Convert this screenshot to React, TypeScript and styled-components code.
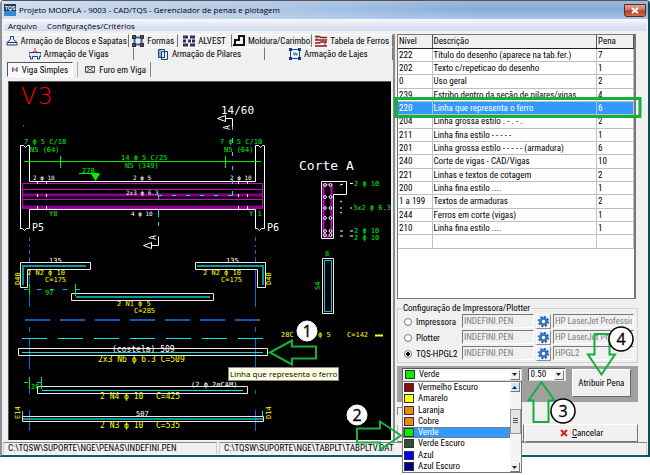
import React from "react";
import styled, { createGlobalStyle, css } from "styled-components";

const uiFont = '"Roboto Condensed", "Open Sans Condensed", "Liberation Sans", sans-serif';
const chromeFont = '"Open Sans", "Noto Sans", sans-serif';
const green = "#14b03c";

const GlobalStyle = createGlobalStyle`
  * { box-sizing: border-box; }
  body { margin: 0; background: #fff; font: 9px/12px ${uiFont}; color: #000; }
  button, input, select { font: inherit; color: inherit; }
`;

const Stage = styled.main`
  position: relative;
  min-height: 475px;
`;

const Window = styled.section`
  display: flex;
  flex-direction: column;
  border: 1px solid #56535c;
  border-width: 1px 2px 2px 2px;
  border-color: #56535c #0c4a56 #0c5c70 #8c9299;
  border-radius: 4px 4px 0 0;
  background: #f0f0f0;
`;

const TitleBar = styled.header`
  display: flex;
  align-items: center;
  gap: 3px;
  height: 18px;
  padding: 0 2px;
  background: linear-gradient(90deg, rgba(225, 234, 245, 0.8), rgba(200, 218, 240, 0.55) 45%, transparent 75%),
    linear-gradient(#9ab8dc, #86aad6 45%, #a9c3e4);
`;

const Title = styled.h1`
  flex: 1;
  margin: 0;
  font: 8px/14px ${chromeFont};
`;

const CloseButton = styled.button`
  display: grid;
  place-items: center;
  width: 22px;
  height: 13px;
  padding: 0;
  border: 1px solid #5a2a26;
  border-radius: 0 0 3px 3px;
  background: linear-gradient(#e0a698, #cf6a55 48%, #b53a20 52%, #cf7050);
`;

const MenuBar = styled.nav`
  display: flex;
  gap: 8px;
  height: 12px;
  padding: 0 3px;
  margin: 0 2px;
  background: linear-gradient(#f7f9fd, #dde3f2 60%, #d3dbee);
`;

const MenuItem = styled.button`
  padding: 0 1px;
  border: 0;
  background: none;
  font: 8px/11px ${chromeFont};
`;

const Body = styled.div`
  display: grid;
  grid-template-columns: minmax(0, 393fr) minmax(0, 249fr);
  margin: 0 2px;
  padding-top: 3px;
`;

const LeftPane = styled.div`
  display: flex;
  flex-direction: column;
  min-width: 0;
  border-right: 2px solid #8a8a8a;
  margin-right: 2px;
`;

const TabRow = styled.div<{ $columns: string }>`
  display: grid;
  grid-template-columns: ${(p) => p.$columns};
  height: 13px;
`;

const Tab = styled.button<{ $front?: boolean }>`
  display: flex;
  align-items: center;
  justify-content: center;
  gap: 3px;
  min-width: 0;
  padding: 0;
  border: 0;
  border-top: 1px solid ${(p) => (p.$front ? "#f0f0f0" : "#fff")};
  border-right: 1px solid #777;
  background: #f0f0f0;
  white-space: nowrap;
  line-height: 12px;
`;

const SubTabs = styled.div`
  display: flex;
  gap: 4px;
  height: 21px;
  padding: 2px 3px 4px;
`;

const SubTab = styled.button<{ $pressed?: boolean }>`
  display: flex;
  align-items: center;
  gap: 4px;
  height: 15px;
  padding: 0 4px;
  border: 0;
  border-right: 1px solid #888;
  background: #f0f0f0;
  line-height: 12px;
  white-space: nowrap;
  ${(p) =>
    p.$pressed
      ? css`
          width: 66px;
          border: 1px solid #666;
          border-color: #555 #fff #fff #555;
          background: #f8f8f8;
        `
      : css`
          width: 74px;
          border-left: 1px solid #aaa;
          padding-left: 7px;
        `}
`;

const CanvasFrame = styled.div`
  flex: 1;
  margin: 0 2px 2px 4px;
  border-top: 1px solid #555;
  border-left: 1px solid #555;
  background: #000;
`;

const Drawing = styled.svg`
  display: block;
  width: 100%;
  height: 356px;
  font-family: "DejaVu Sans Mono", "Liberation Mono", monospace;
`;

const RightPane = styled.div`
  display: flex;
  flex-direction: column;
  gap: 3px;
  min-width: 0;
  padding-right: 8px;
`;

const GridBox = styled.div`
  height: 265px;
  border: 1px solid #777;
  border-right-width: 2px;
  margin-right: 2px;
  background: #fff;
`;

const LevelTable = styled.table`
  width: 100%;
  border-collapse: collapse;
  table-layout: fixed;
`;

const Th = styled.th<{ $width?: string }>`
  width: ${(p) => p.$width ?? "auto"};
  height: 13px;
  padding: 0 1px;
  border-right: 1px solid #555;
  border-bottom: 1px solid #222;
  background: #f0f0f0;
  font-weight: normal;
  line-height: 12px;
  text-align: left;
`;

const Tr = styled.tr<{ $selected?: boolean }>`
  height: 13px;
  &:nth-child(3n) { height: 14px; }
  ${(p) => p.$selected && css`background: #3399ff; color: #fff;`}
`;

const Td = styled.td`
  padding: 0 1px;
  border-right: 1px solid #c0c0c0;
  border-bottom: 1px solid #c0c0c0;
  line-height: 12px;
  white-space: nowrap;
`;

const Group = styled.fieldset`
  display: grid;
  grid-template-columns: 56px minmax(0, 71fr) 15px minmax(0, 80fr);
  gap: 1px 2px;
  min-width: 0;
  height: 61px;
  margin: 0;
  padding: 0 3px 2px 6px;
  border: 1px solid #d0d0d0;
`;

const Legend = styled.legend`
  padding: 0 1px;
  margin-left: -2px;
  line-height: 12px;
`;

const RadioLabel = styled.label`
  display: flex;
  align-items: center;
  gap: 4px;
  white-space: nowrap;
`;

const Radio = styled.input`
  appearance: none;
  flex: none;
  width: 8px;
  height: 8px;
  margin: 0;
  border: 1px solid #777;
  border-radius: 50%;
  background: #fff;
  &:checked { background: radial-gradient(#000 0 2px, #fff 2px); }
`;

const FileInput = styled.input`
  width: 100%;
  min-width: 0;
  height: 14px;
  padding: 0 1px;
  border: 1px solid #888;
  border-color: #777 #fff #fff #777;
  background: #f0f0f0;
  color: #808080;
`;

const GearButton = styled.button`
  display: grid;
  place-items: center;
  height: 15px;
  padding: 0;
  border: 1px solid #888;
  border-color: #fff #888 #888 #fff;
  background: #f0f0f0;
`;

const PenBar = styled.div`
  display: grid;
  grid-template-columns: minmax(0, 119fr) minmax(0, 38fr) minmax(0, 59fr);
  gap: 6px;
  height: 36px;
  padding: 2px 7px 2px 5px;
  background: #a0a0a0;
`;

const ComboFrame = styled.label`
  position: relative;
  display: flex;
  align-items: center;
  gap: 4px;
  height: 13px;
  padding: 0 1px 0 2px;
  border: 1px solid #666;
  border-color: #555 #ddd #ddd #555;
  background: #fff;
`;

const Combo = styled.select`
  appearance: none;
  flex: 1;
  min-width: 0;
  padding: 0;
  border: 0;
  background: transparent;
  line-height: 11px;
`;

const Arrow = styled.span<{ $up?: boolean }>`
  display: grid;
  place-items: center;
  flex: none;
  width: 10px;
  height: 10px;
  border: 1px solid #777;
  border-color: #fff #777 #777 #fff;
  background: ${(p) => (p.$up ? "#cfe5fa" : "#f0f0f0")};
`;

const Swatch = styled.span<{ $color: string }>`
  flex: none;
  width: 10px;
  height: 9px;
  border: 1px solid #333;
  background: ${(p) => p.$color};
`;

const AssignButton = styled.button`
  height: 28px;
  padding: 0;
  margin-top: 1px;
  border: 1px solid #777;
  border-color: #fff #666 #666 #fff;
  background: #f0f0f0;
  white-space: nowrap;
`;

const Footer = styled.div`
  display: flex;
  flex-direction: column;
  gap: 9px;
  padding-top: 2px;
`;

const GroupCorner = styled.div`
  width: 50%;
  height: 8px;
  border-top: 1px solid #888;
  border-left: 1px solid #888;
`;

const Actions = styled.div`
  display: grid;
  grid-template-columns: 126fr 112fr;
  gap: 1px;
`;

const ActionSlot = styled.div`
  height: 18px;
  border: 1px solid #888;
  border-color: #fff #777 #777 #bbb;
`;

const CancelButton = styled.button`
  display: flex;
  align-items: center;
  justify-content: center;
  gap: 4px;
  height: 18px;
  padding: 0;
  border: 1px solid #777;
  border-color: #fff #777 #777 #fff;
  background: #f0f0f0;
`;

const StatusBar = styled.footer`
  display: grid;
  grid-template-columns: 1fr 2fr;
  gap: 2px;
  height: 13px;
  margin: 0 1px;
`;

const StatusCell = styled.span`
  padding: 0 4px;
  border: 1px solid #888;
  border-color: #888 #ccc #fff #ccc;
  white-space: nowrap;
  line-height: 11px;
`;

const OptionList = styled.div`
  position: absolute;
  z-index: 1;
  top: 12px;
  left: -1px;
  right: -1px;
  display: grid;
  grid-template-columns: minmax(0, 1fr) 11px;
  height: 92px;
  border: 1px solid #777;
  background: #fff;
`;

const Options = styled.ul`
  display: grid;
  grid-auto-rows: 1fr;
  margin: 0;
  padding: 0;
  list-style: none;
`;

const Option = styled.li<{ $selected?: boolean }>`
  display: flex;
  align-items: center;
  gap: 4px;
  padding-left: 1px;
  line-height: 11px;
  ${(p) => p.$selected && css`
    background: #3399ff;
    color: #fff;
    outline: 1px dotted #b5651d;
    outline-offset: -1px;
  `}
`;

const ScrollTrack = styled.div`
  display: flex;
  flex-direction: column;
  justify-content: space-between;
  align-items: stretch;
  background: #f4f4f4;
`;

const Thumb = styled.span`
  display: grid;
  place-items: center;
  height: 25px;
  margin-bottom: 12px;
  border: 1px solid #999;
  background: #e4e4e4;
`;

const Tooltip = styled.div`
  position: absolute;
  top: 367px;
  left: 228px;
  padding: 0 1px;
  border: 1px solid #888;
  background: #ffffe1;
  font: 8px/12px ${chromeFont};
  white-space: nowrap;
`;

const Annotations = styled.svg`
  position: absolute;
  z-index: 2;
  top: 0;
  left: 0;
  pointer-events: none;
  font-family: "Open Sans", sans-serif;
`;

const levels: [string, string, string][] = [
  ["222", "Título do desenho (aparece na tab.fer.)", "7"],
  ["202", "Texto c/repeticao do desenho", "1"],
  ["0", "Uso geral", "2"],
  ["239", "Estribo dentro da seção de pilares/vigas", "4"],
  ["220", "Linha que representa o ferro", "6"],
  ["204", "Linha grossa estilo . - . - .", "2"],
  ["211", "Linha fina estilo - - - - -", "1"],
  ["201", "Linha grossa estilo - - - - - (armadura)", "6"],
  ["240", "Corte de vigas - CAD/Vigas", "10"],
  ["221", "Linhas e textos de cotagem", "2"],
  ["200", "Linha fina estilo ....", "1"],
  ["1 a 199", "Textos de armaduras", "2"],
  ["244", "Ferros em corte (vigas)", "1"],
  ["210", "Linha fina estilo ....", "1"],
  ["", "", ""],
];

const printers: [string, string][] = [
  ["Impressora", "HP LaserJet Professional"],
  ["Plotter", "HP LaserJet Professional"],
  ["TQS-HPGL2", "HPGL2"],
];

const pens: [string, string][] = [
  ["Vermelho Escuro", "#8b0a0a"],
  ["Amarelo", "#ffff00"],
  ["Laranja", "#f0860c"],
  ["Cobre", "#f0860c"],
  ["Verde", "#00f000"],
  ["Verde Escuro", "#2f5032"],
  ["Azul", "#0000ff"],
  ["Azul Escuro", "#00008b"],
];

const Glyph = ({ w = 12, h = 12, children }: { w?: number; h?: number; children: React.ReactNode }) => (
  <svg width={w} height={h} viewBox={`0 0 ${w} ${h}`} fill="none" aria-hidden="true">
    {children}
  </svg>
);

const FootingIcon = () => (
  <Glyph><path d="M4.500 1.500h3v3l3.500 3v2.500H1V7.500l3.500-3zM1 7.500h10" stroke="#1f3f78" fill="#e8f0fa" /></Glyph>
);
const FormsIcon = () => (
  <Glyph>
    <path d="M2.500 2.500h7v7h-7z" stroke="#2d68a8" strokeWidth="2" />
    <path d="M0 0h4v4H0zM8 0h4v4H8zM0 8h4v4H0zM8 8h4v4H8z" fill="#24324c" />
    <path d="M1 1h2v2H1zM9 1h2v2H9zM1 9h2v2H1zM9 9h2v2H9z" fill="#a03030" />
  </Glyph>
);
const BlocksIcon = () => (
  <Glyph>
    <path d="M0 2h5M7 2h5M0 6h3M5 6h3M9 6h3M0 10h5M7 10h5" stroke="#1f2f58" strokeWidth="3" />
    <path d="M1 2h2M8 2h2M5 6h2M1 10h2M8 10h2" stroke="#c02030" />
  </Glyph>
);
const StampIcon = () => (
  <Glyph><path d="M0 10h11V1H6v4M2 10V5h5M11 1v9" stroke="#111" strokeWidth="2" /></Glyph>
);
const IronTableIcon = () => (
  <Glyph>
    <path d="M0 1.500h4l2 1h6M0 5h12M0 8h4l2-1h6M0 11h12" stroke="#8a2020" strokeWidth="1.500" />
    <path d="M2 1v4M10 7v4" stroke="#8a2020" />
  </Glyph>
);
const BeamIcon = () => (
  <Glyph><path d="M1.500 11V8.500H0v-4h12v4h-1.500V11h-2V8.500h-5V11z" fill="#dce8f6" stroke="#1f3f78" /><path d="M6 0v5M4 3l2 2 2-2" stroke="#d02020" /></Glyph>
);
const PillarIcon = () => (
  <Glyph><path d="M1.500 1.500h6v8h-6zM4.500 3.500h6v8h-6z" stroke="#1f3f78" fill="#e0ecf8" /><path d="M3 2v7" stroke="#2d68a8" /></Glyph>
);
const SlabIcon = () => (
  <Glyph>
    <path d="M1.500 1.500h9v9h-9z" stroke="#1f4f90" />
    <path d="M0 0h3v3H0zM9 0h3v3H9zM0 9h3v3H0zM9 9h3v3H9z" fill="#163a78" />
    <path d="M4 5h1v2h1V5h1v2h1V5" stroke="#2d78c0" />
  </Glyph>
);
const SimpleBeamIcon = () => (
  <Glyph w={11} h={9}><path d="M1.500 0v9M9.500 0v9" stroke="#333" strokeWidth="2" /><path d="M2 5h7M3 2l2 2h1l2-2M3 8l2-2h1l2 2" stroke="#a030a0" /></Glyph>
);
const HoleIcon = () => (
  <Glyph w={11} h={9}><path d="M.5 1.500h10v6H.5zM2 2l3.500 3L9 2M2 7l2-2M9 7L7 5" stroke="#222" /></Glyph>
);
const GearIcon = () => (
  <Glyph w={11} h={11}>
    <circle cx="5.500" cy="5.500" r="4.500" stroke="#174f98" strokeWidth="2" strokeDasharray="2 1.500" />
    <circle cx="5.500" cy="5.500" r="3" stroke="#2d78cc" strokeWidth="2.500" />
    <circle cx="5.500" cy="5.500" r="1.300" fill="#fff" />
  </Glyph>
);
const Chevron = ({ up }: { up?: boolean }) => (
  <Glyph w={5} h={3}><path d={up ? "M0 3h5L2.500 0z" : "M0 0h5L2.500 3z"} fill="#222" /></Glyph>
);

type NoteProps = { x: number; y: number; c?: string; s?: number; r?: number; children: string };
const Note = ({ x, y, c = "#ffff00", s = 7, r, children }: NoteProps) => (
  <text x={x} y={y} fill={c} fontSize={s} transform={r ? `rotate(${r} ${x} ${y})` : undefined} xmlSpace="preserve">
    {children}
  </text>
);

const lime = "#00f000";
const white = "#fff";

const BeamDrawing = () => (
  <Drawing viewBox="9 82 382 356" preserveAspectRatio="xMinYMin meet" role="img">
    <g fontFamily="DejaVu Sans" fontWeight="200">
      <text x="21 38" y="104" fontSize="23" fill="#ff0000">V3</text>
    </g>
    <path d="M23.500 125v2" stroke="#ff0000" />

    <g fill="none" stroke="#0a6ad8">
      <path d="M29.500 237v4M29.500 245v2M29.500 250v4M29.500 257v5M29.500 270v37M29.500 327v5M29.500 339v30M29.500 380v14M29.500 410v21" />
      <path d="M255.500 237v4M255.500 245v2M255.500 250v4M255.500 257v5M255.500 270v37M255.500 327v5M255.500 339v30M255.500 390v4M255.500 410v21" />
      <path d="M25 320h235" strokeDasharray="25 10" strokeWidth="2" stroke="#0a5cb4" />
    </g>
    <path d="M22 338.500h241" stroke="#00e5e5" strokeDasharray="25 11" />

    <g fill="none" stroke={white}>
      <path d="M20.500 229V145.500h3l2 2 2-2h2V181.500H255.500V145.500h3l2 2 2-2h2V228.500h-3l-2 2-2-2h-2V209.500H29.500V228.500h-3l-2 2-2-2h-2" />
    </g>
    <g fill="none" stroke="#d000d0">
      <path d="M22.500 183.500h240v25h-240zM22 189.500h240M22 199.500h240" />
      <path d="M23 195h239M23 207h239" stroke="#860086" strokeWidth="3" />
    </g>
    <path d="M37.500 181v3M46.500 181v3M37.500 194v3M46.500 194v3M37.500 206v3M46.500 206v3M238.500 181v3M247.500 181v3M238.500 194v3M247.500 194v3M238.500 206v3M247.500 206v3" stroke={white} />
    <g stroke={lime} fill="none">
      <path d="M24 161.500h237M60.500 156v12M225.500 156v12M79 173.500h20" />
      <path d="M91 174h9l-4.500 7z" fill={lime} stroke="none" />
    </g>
    <g stroke="#00e5e5">
      <path d="M158 195.500h75" strokeDasharray="4 10" />
      <path d="M232.500 126v4M232.500 138v5M232.500 152v4M232.500 166v4M232.500 180v4M232.500 191v5M158.500 196v4M158.500 209v8M158.500 222v4" />
    </g>
    <g stroke={white} fill="none">
      <path d="M217.500 118.500l8-3v6zM225 118.500h7.500v8" />
      <path d="M143.500 245.500l8-3v6zM151 245.500h7.500v-9" />
      <path d="M321.500 181.500h25v13h-13v44h-12z" />
      <path d="M340 185l3-1M340 201l2 1M340 208h2M340 213l2-1M340 231h3M340 236h3M350 183.500h3M350 208h2M350 231h3M350 236h3" />
    </g>
    <path d="M323.500 184.500h8v52h-8z" fill="none" stroke="#d000d0" strokeWidth="2" />
    {[185, 197, 208, 218, 231, 235].map((y) => (
      <g key={y} fill="#000" stroke={white}>
        <circle cx="325" cy={y} r="1.400" />
        <circle cx="330.500" cy={y} r="1.400" />
      </g>
    ))}

    <Note x={221} y={114} c={white} s={11}>14/60</Note>
    <Note x={230} y={130} c={white} s={8} r={-90}>A</Note>
    <Note x={156} y={240} c={white} s={8} r={-90}>A</Note>
    <Note x={24} y={144} c={lime}>7 ϕ 5 C/10</Note>
    <Note x={30} y={152} c={lime}>N5 (64)</Note>
    <Note x={220} y={144} c={lime}>7 ϕ 5 C/10</Note>
    <Note x={224} y={152} c={lime}>N5 (64)</Note>
    <Note x={121} y={160} c={lime}>14 ϕ 5 C/25</Note>
    <Note x={125} y={168} c={lime}>N5 (349)</Note>
    <Note x={82} y={173} c={lime}>270</Note>
    <Note x={33} y={180} c={white} s={6}>2 ϕ 10</Note>
    <Note x={133} y={180} c={white} s={6}>2 ϕ 5</Note>
    <Note x={230} y={180} c={white} s={6}>2 ϕ 10</Note>
    <Note x={126} y={195} c={white} s={6}>2x3 ϕ 6.3</Note>
    <Note x={131} y={216} c={white} s={6}>4 ϕ 10</Note>
    <Note x={49} y={216} c={lime}>Y8</Note>
    <Note x={249} y={216} c={lime}>Y 1</Note>
    <Note x={32} y={231} c={white} s={10}>P5</Note>
    <Note x={267} y={231} c={white} s={10}>P6</Note>
    <Note x={299} y={170} c={white} s={13}>Corte A</Note>
    <Note x={354} y={186} c={lime}>2 ϕ 10</Note>
    <Note x={353} y={210} c={lime}>3x2 ϕ 6.3</Note>
    <Note x={354} y={233} c={lime}>2 ϕ 10</Note>
    <Note x={354} y={240} c={lime}>2 ϕ 10</Note>

    <g fill="none" stroke="#e8e8e8">
      <path d="M20.500 262.500h70v7h-63v18h-7z" />
      <path d="M195.500 262.500h70v25h-8v-18h-62z" />
      <path d="M71.500 293.500h142v7h-142z" />
      <path d="M18.500 348.500h249v7h-249z" />
      <path d="M37.500 386.500h210v7h-210z" />
      <path d="M22.500 416.500h241v5h-241z" />
      <path d="M322.500 258.500h11v55h-11z" />
    </g>
    <g fill="none" stroke="#009c9c" strokeWidth="2">
      <path d="M23 285v-19h63M197 266h66v19M76 297h134M23 419h240" />
      <path d="M324.500 260.500h7v51h-7z" stroke="#00c8e5" strokeWidth="1" />
      <path d="M22 352.500h241M42 390.500h201M22.500 411v5M262.500 411v5" stroke="#00e5e5" strokeWidth="1" />
      <path d="M24 289.500h58M24 382.500h24" stroke="#00c8d0" strokeWidth="1" strokeDasharray="4 9" />
    </g>
    <path d="M29.500 284v11M75.500 284v12M29.500 377v12M41.500 377v12" stroke={lime} />

    <Note x={49} y={263} c={white}>135</Note>
    <Note x={226} y={263} c={white}>135</Note>
    <Note x={27} y={275}>2 N2 ϕ 10</Note>
    <Note x={45} y={282}>C=175</Note>
    <Note x={203} y={275}>2 N2 ϕ 10</Note>
    <Note x={221} y={282}>C=175</Note>
    <Note x={20} y={285} r={-90}>D40</Note>
    <Note x={271} y={285} r={-90}>D40</Note>
    <Note x={45} y={295} c={lime}>97</Note>
    <Note x={117} y={306}>2 N1 ϕ 5</Note>
    <Note x={134} y={313}>C=285</Note>
    <Note x={112} y={352} c={white} s={8}>(costela) 509</Note>
    <Note x={98} y={362} s={8}>2x3 N6 ϕ 6.3 C=509</Note>
    <Note x={31} y={389} c={lime}>26</Note>
    <Note x={191} y={387} c={white}>(2 ϕ 2øCAM)</Note>
    <Note x={100} y={399} s={8}>2 N4 ϕ 10</Note>
    <Note x={156} y={399} s={8}>C=425</Note>
    <Note x={136} y={416} c={white}>507</Note>
    <Note x={100} y={428} s={8}>2 N3 ϕ 10</Note>
    <Note x={156} y={428} s={8}>C=535</Note>
    <Note x={20} y={419} r={-90}>E14</Note>
    <Note x={271} y={419} r={-90}>D14</Note>
    <Note x={325} y={256} c={lime}>8</Note>
    <Note x={320} y={290} c={lime} r={-90}>54</Note>
    <Note x={281} y={337}>28C</Note>
    <Note x={318} y={337}>ϕ 5</Note>
    <Note x={347} y={337}>C=142</Note>
    <path d="M375 335.500h8" stroke="#ffff00" strokeWidth="2" />
  </Drawing>
);

const Step = ({ x, y, n, ring }: { x: number; y: number; n: number; ring?: boolean }) => (
  <g>
    <circle cx={x} cy={y} r={ring ? 12 : 10} fill="#fff" stroke={ring ? "#000" : "#fff"} strokeWidth={ring ? 1.5 : 1} />
    <text x={x} y={y + 6} fontSize="16" textAnchor="middle" stroke="#000" strokeWidth="0.3">{n}</text>
  </g>
);

export default function App() {
  return (
    <Stage>
      <GlobalStyle />
      <Window>
        <TitleBar>
          <Glyph w={12} h={12}>
            <path d="M0 0h12v12H0z" fill="#223a58" />
            <path d="M0 7h12v5H0z" fill="#2f8ad8" />
            <text x="1" y="6" fontSize="5" fontWeight="bold" fill="#fff" fontFamily="Liberation Sans">TQS</text>
          </Glyph>
          <Title>Projeto MODPLA - 9003 - CAD/TQS - Gerenciador de penas e plotagem</Title>
          <CloseButton aria-label="×">
            <Glyph w={8} h={7}><path d="M1 1l6 5M7 1L1 6" stroke="#fff" strokeWidth="2" /></Glyph>
          </CloseButton>
        </TitleBar>
        <MenuBar>
          <MenuItem>Arquivo</MenuItem>
          <MenuItem>Configurações/Critérios</MenuItem>
        </MenuBar>
        <Body>
          <LeftPane>
            <TabRow $columns="126fr 49fr 54fr 81fr 81fr">
              <Tab><FootingIcon />Armação de Blocos e Sapatas</Tab>
              <Tab><FormsIcon />Formas</Tab>
              <Tab><BlocksIcon />ALVEST</Tab>
              <Tab><StampIcon />Moldura/Carimbo</Tab>
              <Tab><IronTableIcon />Tabela de Ferros</Tab>
            </TabRow>
            <TabRow $columns="131fr 131fr 129fr">
              <Tab $front><BeamIcon />Armação de Vigas</Tab>
              <Tab><PillarIcon />Armação de Pilares</Tab>
              <Tab><SlabIcon />Armação de Lajes</Tab>
            </TabRow>
            <SubTabs>
              <SubTab $pressed><SimpleBeamIcon />Viga Simples</SubTab>
              <SubTab><HoleIcon />Furo em Viga</SubTab>
            </SubTabs>
            <CanvasFrame><BeamDrawing /></CanvasFrame>
          </LeftPane>
          <RightPane>
            <GridBox>
              <LevelTable>
                <thead>
                  <tr><Th $width="34px">Nível</Th><Th>Descrição</Th><Th $width="37px">Pena</Th></tr>
                </thead>
                <tbody>
                  {levels.map(([level, text, pen], i) => (
                    <Tr key={i} $selected={level === "220"}>
                      <Td>{level}</Td><Td>{text}</Td><Td>{pen}</Td>
                    </Tr>
                  ))}
                </tbody>
              </LevelTable>
            </GridBox>
            <Group>
              <Legend>Configuração de Impressora/Plotter</Legend>
              {printers.map(([name, device]) => (
                <React.Fragment key={name}>
                  <RadioLabel>
                    <Radio type="radio" name="printer" defaultChecked={name === "TQS-HPGL2"} />
                    {name}
                  </RadioLabel>
                  <FileInput aria-label={name} defaultValue="INDEFINI.PEN" />
                  <GearButton aria-label={name}><GearIcon /></GearButton>
                  <FileInput aria-label={name} defaultValue={device} />
                </React.Fragment>
              ))}
            </Group>
            <PenBar>
              <ComboFrame as="div">
                <Swatch $color="#00f000" />
                <Combo aria-label="Verde" defaultValue="Verde">
                  {pens.map(([name]) => <option key={name}>{name}</option>)}
                </Combo>
                <Arrow><Chevron /></Arrow>
                <OptionList>
                  <Options role="listbox">
                    {pens.map(([name, color]) => (
                      <Option key={name} role="option" aria-selected={name === "Verde"} $selected={name === "Verde"}>
                        <Swatch $color={color} />{name}
                      </Option>
                    ))}
                  </Options>
                  <ScrollTrack>
                    <Arrow $up><Chevron up /></Arrow>
                    <Thumb><Glyph w={5} h={6}><path d="M0 .5h5M0 2.500h5M0 4.500h5" stroke="#555" /></Glyph></Thumb>
                    <Arrow><Chevron /></Arrow>
                  </ScrollTrack>
                </OptionList>
              </ComboFrame>
              <ComboFrame>
                <Combo aria-label="0.50"><option>0.50</option></Combo>
                <Arrow><Chevron /></Arrow>
              </ComboFrame>
              <AssignButton>Atribuir Pena</AssignButton>
            </PenBar>
            <Footer>
              <GroupCorner />
              <Actions>
                <ActionSlot />
                <CancelButton>
                  <Glyph w={8} h={8}><path d="M1 1l6 6M7 1L1 7" stroke="#e01818" strokeWidth="2" /></Glyph>
                  <span><u>C</u>ancelar</span>
                </CancelButton>
              </Actions>
            </Footer>
          </RightPane>
        </Body>
        <StatusBar>
          <StatusCell>C:\TQSW\SUPORTE\NGE\PENAS\INDEFINI.PEN</StatusCell>
          <StatusCell>C:\TQSW\SUPORTE\NGE\TABPLT\TABPLTV.DAT</StatusCell>
        </StatusBar>
      </Window>
      <Tooltip>Linha que representa o ferro</Tooltip>
      <Annotations width="650" height="475" viewBox="0 0 650 475" aria-hidden="true">
        <g fill="none" stroke={green} strokeWidth="3">
          <path d="M395.500 98.500h244.500v18h-244.500z" />
          <path d="M270 352.500l22-12v6h24v12h-24v6z" strokeWidth="2" />
          <path d="M357 428.500h23v-7l21 14-21 14v-7h-23z" strokeWidth="2" />
          <path d="M541.500 382l13 18.500h-6V422h-15v-21.500h-5z" strokeWidth="2" />
          <path d="M594.500 334h15v20.500h5.500l-13.500 20-13.500-20h6.500z" strokeWidth="2" />
        </g>
        <Step x={307} y={331} n={1} />
        <Step x={357} y={415} n={2} />
        <Step x={563} y={411} n={3} ring />
        <Step x={621} y={339} n={4} ring />
      </Annotations>
    </Stage>
  );
}
